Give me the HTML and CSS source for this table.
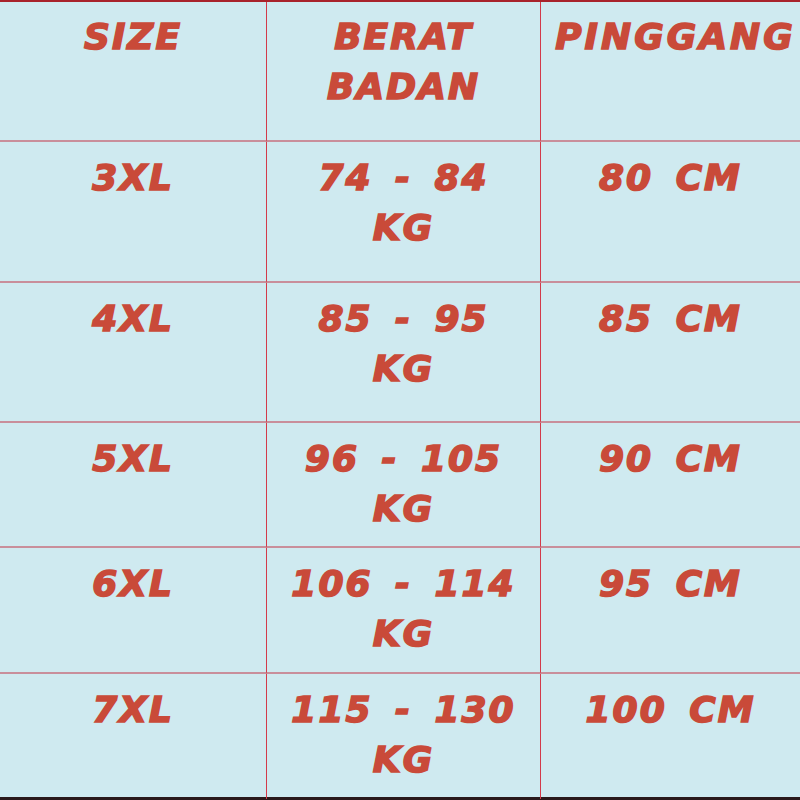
FILE: index.html
```html
<!DOCTYPE html>
<html lang="id">
<head>
<meta charset="utf-8">
<title>Size Chart</title>
<link rel="stylesheet" href="styles.css">
</head>
<body>
<div class="chart">
  <div class="cell c1 r0">SIZE</div>
  <div class="cell c2 r0">BERAT<br>BADAN</div>
  <div class="cell c3 r0 wide">PINGGANG</div>

  <div class="cell c1 r1">3XL</div>
  <div class="cell c2 r1">74 - 84<br>KG</div>
  <div class="cell c3 r1">80 CM</div>

  <div class="cell c1 r2">4XL</div>
  <div class="cell c2 r2">85 - 95<br>KG</div>
  <div class="cell c3 r2">85 CM</div>

  <div class="cell c1 r3">5XL</div>
  <div class="cell c2 r3">96 - 105<br>KG</div>
  <div class="cell c3 r3">90 CM</div>

  <div class="cell c1 r4">6XL</div>
  <div class="cell c2 r4">106 - 114<br>KG</div>
  <div class="cell c3 r4">95 CM</div>

  <div class="cell c1 r5 last">7XL</div>
  <div class="cell c2 r5 last">115 - 130<br>KG</div>
  <div class="cell c3 r5 last">100 CM</div>
</div>
<div class="bottom-edge"></div>
</body>
</html>
```

FILE: styles.css
```css
html, body {
  margin: 0;
  padding: 0;
  width: 800px;
  height: 800px;
  overflow: hidden;
  background: #cfeaf0;
}

.chart {
  display: grid;
  grid-template-columns: 267px 274px 259px;
  grid-template-rows: 140px 141px 140px 125px 126px 125px;
  border-top: 2px solid #a8232b;
  box-sizing: border-box;
  height: 797px;
  font-family: "DejaVu Sans", "Liberation Sans", sans-serif;
  font-weight: 700;
  font-style: italic;
  font-size: 36px;
  line-height: 50px;
  letter-spacing: 2px;
  word-spacing: 8px;
  color: #c94a39;
  -webkit-text-stroke: 1.6px #c94a39;
}

.cell {
  box-sizing: border-box;
  text-align: center;
  padding-top: 11px;
  border-bottom: 2px solid #c98f9b;
  overflow: hidden;
  white-space: nowrap;
}

.c1, .c2 {
  border-right: 1px solid #d33a4a;
}

.r0 {
  padding-top: 10px;
}

.wide {
  letter-spacing: 3px;
  padding-left: 10px;
}

.last {
  border-bottom: none;
}

.bottom-edge {
  height: 3px;
  background: #2a1a1c;
}
```
